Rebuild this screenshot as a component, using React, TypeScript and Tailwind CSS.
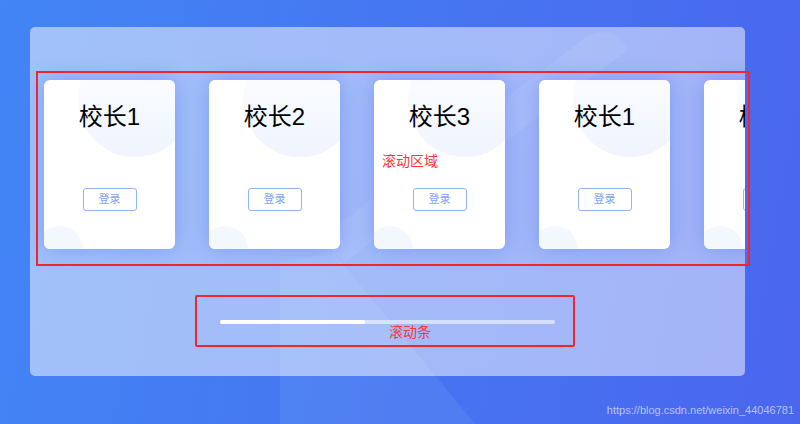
import React from 'react';

const cards = ['校长1', '校长2', '校长3', '校长1', '校长2'];

function Card({ name }: { name: string }) {
  return (
    <div className="relative w-[131px] h-[169px] shrink-0 rounded-[6px] bg-white overflow-hidden shadow-[0_0_22px_rgba(78,118,240,0.45)]">
      {/* decorative circles */}
      <div className="absolute left-[34px] top-[-37px] w-[114px] h-[114px] rounded-full bg-gradient-to-b from-white to-[#eff4fe]" />
      <div className="absolute left-[-7px] top-[146px] w-[46px] h-[46px] rounded-full bg-[#f3f7fe]" />
      <div className="relative flex flex-col items-center pt-[19px]">
        <div className="text-[24px] leading-[36px] text-black">{name}</div>
        <button className="mt-[53px] w-[54px] h-[23px] rounded-[3px] border border-[#93b4f9] bg-white text-[11px] text-[#7ea4f6]">
          登录
        </button>
      </div>
    </div>
  );
}

export default function App() {
  return (
    <div
      className="relative w-[800px] h-[424px] overflow-hidden bg-[linear-gradient(100deg,#4285f5,#4a66ee)] pt-[27px] pl-[30px]"
      style={{ fontFamily: '"Liberation Sans", "Noto Sans CJK SC", sans-serif' }}
    >
      {/* background decoration */}
      <svg className="absolute inset-0" width="800" height="424" viewBox="0 0 800 424">
        <path d="M280 262 L333 252 L475 424 L280 424 Z" fill="#9cd0ff" fillOpacity="0.12" />
        <path d="M585 38 Q612 22 628 50 L345 262 L318 240 Z" fill="#ffffff" fillOpacity="0.07" />
      </svg>

      <div className="relative w-[715px] h-[349px] rounded-[5px] bg-white/50 overflow-hidden">
        <div className="flex gap-[34px] pl-[14px] pt-[53px]">
          {cards.map((c, i) => (
            <Card key={i} name={c} />
          ))}
        </div>
        <div className="mt-[71px] ml-[190px] w-[335px] h-[4px] rounded-full bg-white/55">
          <div className="w-[145px] h-[4px] rounded-full bg-white" />
        </div>
      </div>

      {/* annotations */}
      <div className="absolute left-[36px] top-[71px] w-[714px] h-[195px] border-2 border-[#f0262b]" />
      <div className="absolute left-[382px] top-[151px] text-[14px] leading-[20px] text-[#ff3535]">滚动区域</div>
      <div className="absolute left-[195px] top-[295px] w-[380px] h-[52px] rounded-[2px] border-2 border-[#f0262b]" />
      <div className="absolute left-[389px] top-[322px] text-[14px] leading-[20px] text-[#f2383c]">滚动条</div>

      <div className="absolute right-[6px] top-[403px] text-[11px] leading-[14px] text-white/60">
        https://blog.csdn.net/weixin_44046781
      </div>
    </div>
  );
}
